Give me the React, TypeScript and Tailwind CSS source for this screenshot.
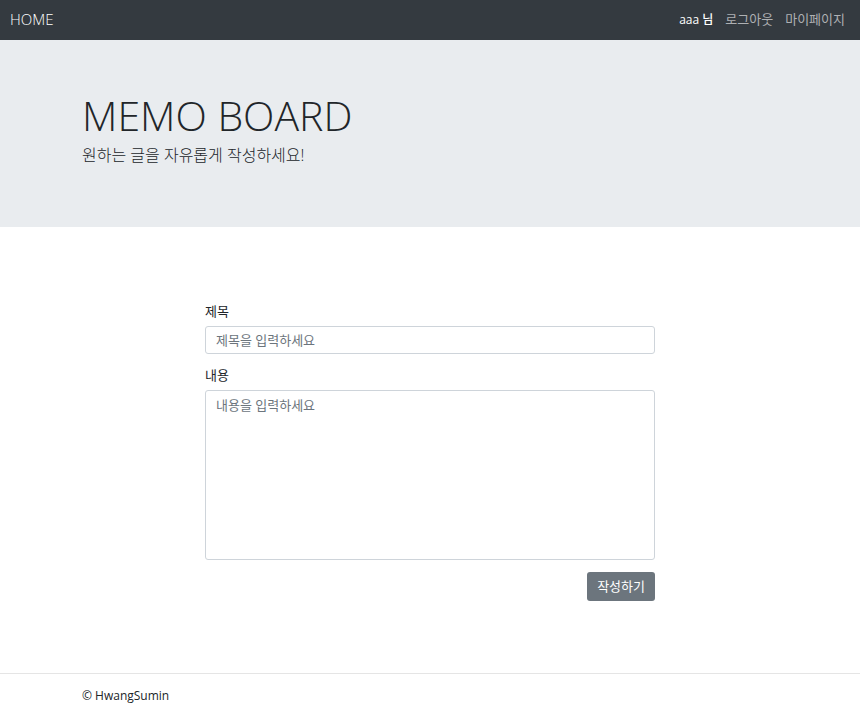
export default function App() {
  return (
    <div className="min-h-screen bg-white font-['Open_Sans','Noto_Sans_CJK_KR',sans-serif] text-[13px] text-[#212529]">
      <nav className="flex h-10 items-center justify-between bg-[#343a40] pr-[15px] pl-2.5">
        <a href="#" className="pb-0.5 text-[15px] font-light text-white">HOME</a>
        <div className="flex items-center gap-3 text-[#aeb0b3]">
          <span className="text-xs font-medium text-white">aaa 님</span>
          <a href="#">로그아웃</a>
          <a href="#">마이페이지</a>
        </div>
      </nav>
      <header className="bg-[#e9ecef] pt-[55px] pb-[60px]">
        <div className="mx-auto w-full max-w-[696px]">
          <h1 className="mb-2 text-[41px] leading-10 font-light">MEMO BOARD</h1>
          <p className="text-base leading-6 font-light">원하는 글을 자유롭게 작성하세요!</p>
        </div>
      </header>
      <main className="mx-auto w-full max-w-[450px] pt-[75px] pb-18">
        <form>
          <label htmlFor="title" className="mb-1.5 block leading-[18px]">제목</label>
          <input id="title" type="text" placeholder="제목을 입력하세요" className="mb-3 block h-7 w-full rounded-[3px] border border-[#ced4da] px-2.5 placeholder:text-[#6c757d]" />
          <label htmlFor="content" className="mb-1.5 block leading-[18px]">내용</label>
          <textarea id="content" placeholder="내용을 입력하세요" className="block h-[170px] w-full resize-none rounded-[3px] border border-[#ced4da] px-2.5 py-1 leading-5 placeholder:text-[#6c757d]" />
          <div className="mt-3 flex justify-end">
            <button type="button" className="h-[29px] rounded-[3px] bg-[#6c757d] px-2.5 text-white">작성하기</button>
          </div>
        </form>
      </main>
      <footer className="border-t border-[#e5e5e5] py-3">
        <p className="mx-auto w-full max-w-[696px] text-xs leading-5">© HwangSumin</p>
      </footer>
    </div>
  );
}
